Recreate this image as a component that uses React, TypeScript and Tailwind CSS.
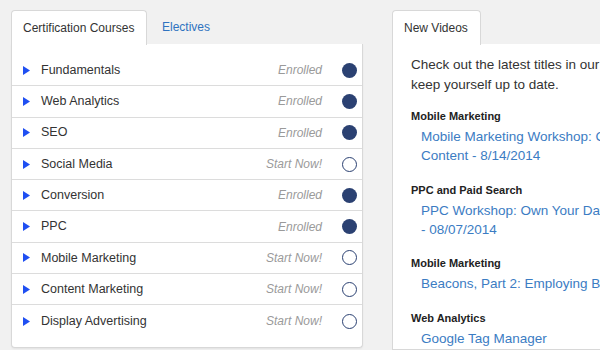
const courses = [
  { name: "Fundamentals", enrolled: true },
  { name: "Web Analytics", enrolled: true },
  { name: "SEO", enrolled: true },
  { name: "Social Media", enrolled: false },
  { name: "Conversion", enrolled: true },
  { name: "PPC", enrolled: true },
  { name: "Mobile Marketing", enrolled: false },
  { name: "Content Marketing", enrolled: false },
  { name: "Display Advertising", enrolled: false },
];

const videos = [
  { topic: "Mobile Marketing", lines: ["Mobile Marketing Workshop: Getting", "Content - 8/14/2014"] },
  { topic: "PPC and Paid Search", lines: ["PPC Workshop: Own Your Data", "- 08/07/2014"] },
  { topic: "Mobile Marketing", lines: ["Beacons, Part 2: Employing Beacons"] },
  { topic: "Web Analytics", lines: ["Google Tag Manager"] },
];

function CourseRow({ name, enrolled }: { name: string; enrolled: boolean }) {
  return (
    <div className="flex items-center h-[31.3px] border-b border-[#dcdcdc] last:border-b-0">
      <svg width="7" height="9" viewBox="0 0 7 9" className="ml-[11px] mr-[11px] shrink-0">
        <polygon points="0,0 7,4.5 0,9" fill="#1f4ff2" />
      </svg>
      <span className="text-[12.5px] text-[#333]">{name}</span>
      <span className="ml-auto text-[12px] italic text-[#9a9a9a]">
        {enrolled ? "Enrolled" : "Start Now!"}
      </span>
      {enrolled ? (
        <span className="ml-[20px] mr-[5px] w-[15px] h-[15px] shrink-0 rounded-full bg-[#2b4172]" />
      ) : (
        <span className="ml-[20px] mr-[5px] w-[15px] h-[15px] shrink-0 rounded-full border-[1.5px] border-[#2b4172]" />
      )}
    </div>
  );
}

export default function App() {
  return (
    <div
      className="w-[600px] h-[350px] overflow-hidden bg-[#f1f1f1] flex pt-[10px] pl-[11px]"
      style={{ fontFamily: '"Liberation Sans", Arial, sans-serif' }}
    >
      <div className="w-[352px] shrink-0 flex flex-col">
        <div className="flex h-[35px]">
          <div className="w-[136px] h-[35px] bg-white border border-b-0 border-[#d8d8d8] rounded-t-[4px] flex items-center pl-[11px] text-[12px] text-[#333] relative z-10">
            Certification Courses
          </div>
          <div className="flex items-center pl-[15px] text-[12px] text-[#2f73c0] flex-1 border-b border-[#d8d8d8]">
            Electives
          </div>
        </div>
        <div className="bg-white border border-t-0 border-[#d8d8d8] rounded-b-[4px] shadow-[0_1px_2px_rgba(0,0,0,0.06)] pt-[11px] pb-[10px] -mt-px">
          {courses.map((c) => (
            <CourseRow key={c.name} name={c.name} enrolled={c.enrolled} />
          ))}
        </div>
      </div>

      <div className="ml-[29px] flex-1 min-w-0 flex flex-col">
        <div className="flex h-[35px]">
          <div className="w-[89px] h-[35px] bg-white border border-b-0 border-[#d8d8d8] rounded-t-[4px] flex items-center pl-[11px] text-[12px] text-[#333] relative z-10">
            New Videos
          </div>
          <div className="flex-1 border-b border-[#d8d8d8]" />
        </div>
        <div className="flex-1 bg-white border border-t-0 border-r-0 border-[#d8d8d8] -mt-px pl-[18px] pt-[11px] whitespace-nowrap overflow-hidden">
          <p className="text-[13.5px] leading-[20px] text-[#333]">
            Check out the latest titles in our video library to
            <br />
            keep yourself up to date.
          </p>
          <div className="mt-[14px] flex flex-col gap-[17.5px]">
            {videos.map((v, i) => (
              <div key={i}>
                <div className="text-[11px] font-bold text-[#222] leading-[14px]">{v.topic}</div>
                <div className="pl-[10px] text-[13.5px] leading-[19px] text-[#3b7cc3] mt-[4px]">
                  {v.lines.map((l) => (
                    <div key={l}>{l}</div>
                  ))}
                </div>
              </div>
            ))}
          </div>
        </div>
      </div>
    </div>
  );
}
